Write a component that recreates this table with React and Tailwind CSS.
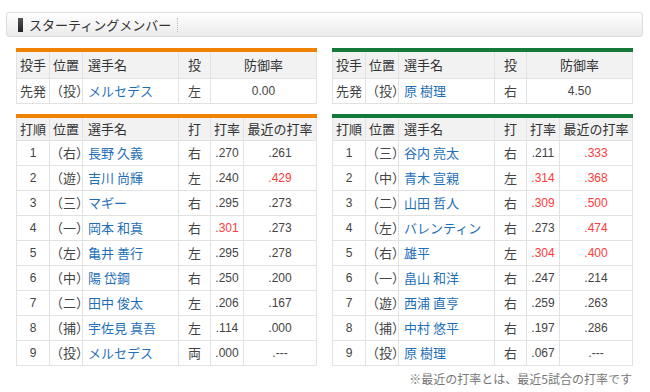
import React from 'react';

const font = { fontFamily: '"Noto Sans CJK JP", "Liberation Sans", sans-serif' };
const num = { fontFamily: '"Liberation Sans", sans-serif' };

const home = {
    color: 'border-t-[#ef8200]',
    pitcher: { name: 'メルセデス', hand: '左', era: '0.00' },
    lineup: [
        ['1', '右', '長野 久義', '右', '.270', '.261'],
        ['2', '遊', '吉川 尚輝', '左', '.240', '.429'],
        ['3', '三', 'マギー', '右', '.295', '.273'],
        ['4', '一', '岡本 和真', '右', '.301', '.273'],
        ['5', '左', '亀井 善行', '左', '.295', '.278'],
        ['6', '中', '陽 岱鋼', '右', '.250', '.200'],
        ['7', '二', '田中 俊太', '左', '.206', '.167'],
        ['8', '捕', '宇佐見 真吾', '左', '.114', '.000'],
        ['9', '投', 'メルセデス', '両', '.000', '.---'],
    ],
};

const away = {
    color: 'border-t-[#16793a]',
    pitcher: { name: '原 樹理', hand: '右', era: '4.50' },
    lineup: [
        ['1', '三', '谷内 亮太', '右', '.211', '.333'],
        ['2', '中', '青木 宣親', '左', '.314', '.368'],
        ['3', '二', '山田 哲人', '右', '.309', '.500'],
        ['4', '左', 'バレンティン', '右', '.273', '.474'],
        ['5', '右', '雄平', '左', '.304', '.400'],
        ['6', '一', '畠山 和洋', '右', '.247', '.214'],
        ['7', '遊', '西浦 直亨', '右', '.259', '.263'],
        ['8', '捕', '中村 悠平', '右', '.197', '.286'],
        ['9', '投', '原 樹理', '右', '.067', '.---'],
    ],
};

// 3割以上は赤
const avgClass = (v) => (v !== '.---' && parseFloat(v) >= 0.3 ? 'text-[#ff3b3b]' : 'text-[#444]');

const th = 'border border-[#e2e2e2] bg-[#f2f2f2] text-[13px] font-normal text-[#333] p-0';
const td = 'h-[25px] border border-[#e2e2e2] bg-white p-0';

function PitcherTable({ team }) {
    return (
        <table className={`w-[301px] table-fixed border-collapse border-t-4 ${team.color}`}>
            <colgroup>
                <col className="w-[33px]" />
                <col className="w-[33px]" />
                <col className="w-[96px]" />
                <col className="w-[32px]" />
                <col />
            </colgroup>
            <thead>
                <tr>
                    <th className={`${th} h-[28px] text-center`}>投手</th>
                    <th className={`${th} h-[28px] text-center`}>位置</th>
                    <th className={`${th} h-[28px] text-left pl-[5px]`}>選手名</th>
                    <th className={`${th} h-[28px] text-center`}>投</th>
                    <th className={`${th} h-[28px] text-center`}>防御率</th>
                </tr>
            </thead>
            <tbody>
                <tr>
                    <td className={`${td} text-[13px] text-center text-[#444]`}>先発</td>
                    <td className={`${td} text-[13px] text-center text-[#444]`}>（投）</td>
                    <td className={`${td} text-[13px] pl-[5px] text-[#1f6fb8]`}>{team.pitcher.name}</td>
                    <td className={`${td} text-[13px] text-center text-[#444]`}>{team.pitcher.hand}</td>
                    <td className={`${td} text-[12px] text-center text-[#444]`} style={num}>{team.pitcher.era}</td>
                </tr>
            </tbody>
        </table>
    );
}

function LineupTable({ team }) {
    return (
        <table className={`w-[301px] table-fixed border-collapse border-t-4 ${team.color}`}>
            <colgroup>
                <col className="w-[33px]" />
                <col className="w-[33px]" />
                <col className="w-[96px]" />
                <col className="w-[32px]" />
                <col className="w-[33px]" />
                <col />
            </colgroup>
            <thead>
                <tr>
                    <th className={`${th} h-[25px] text-center`}>打順</th>
                    <th className={`${th} h-[25px] text-center`}>位置</th>
                    <th className={`${th} h-[25px] text-left pl-[5px]`}>選手名</th>
                    <th className={`${th} h-[25px] text-center`}>打</th>
                    <th className={`${th} h-[25px] text-center`}>打率</th>
                    <th className={`${th} h-[25px] text-center`}>最近の打率</th>
                </tr>
            </thead>
            <tbody>
                {team.lineup.map(([order, pos, name, hand, avg, recent]) => (
                    <tr key={order}>
                        <td className={`${td} text-[12px] text-center text-[#444]`} style={num}>{order}</td>
                        <td className={`${td} text-[13px] text-center text-[#444]`}>（{pos}）</td>
                        <td className={`${td} text-[13px] pl-[5px] text-[#1f6fb8] whitespace-nowrap`}>{name}</td>
                        <td className={`${td} text-[13px] text-center text-[#444]`}>{hand}</td>
                        <td className={`${td} text-[12px] text-center ${avgClass(avg)}`} style={num}>{avg}</td>
                        <td className={`${td} text-[12px] text-center ${avgClass(recent)}`} style={num}>{recent}</td>
                    </tr>
                ))}
            </tbody>
        </table>
    );
}

export default function App() {
    return (
        <div className="w-[650px] h-[392px] bg-white pt-[12px]" style={font}>
            {/* TITLE BAR */}
            <div className="mx-[6px] w-[637px] h-[25px] flex items-center rounded-[3px] border border-[#dcdcdc] bg-gradient-to-b from-[#ffffff] to-[#ebebeb] pl-[11px]">
                <div className="w-[5px] h-[14px] bg-gradient-to-b from-[#555] to-[#222]"></div>
                <span className="ml-[6px] text-[13px] text-[#333] leading-none">スターティングメンバー</span>
                <div className="ml-[6px] h-[14px] border-l border-dotted border-[#bbb]"></div>
            </div>

            {/* PITCHERS */}
            <div className="flex gap-[15px] pl-[16px] mt-[11px]">
                <PitcherTable team={home} />
                <PitcherTable team={away} />
            </div>

            {/* LINEUPS */}
            <div className="flex gap-[15px] pl-[16px] mt-[10px]">
                <LineupTable team={home} />
                <LineupTable team={away} />
            </div>

            <p className="w-[632px] text-right text-[12px] text-[#777] mt-[4px]">
                ※最近の打率とは、最近5試合の打率です
            </p>
        </div>
    );
}
